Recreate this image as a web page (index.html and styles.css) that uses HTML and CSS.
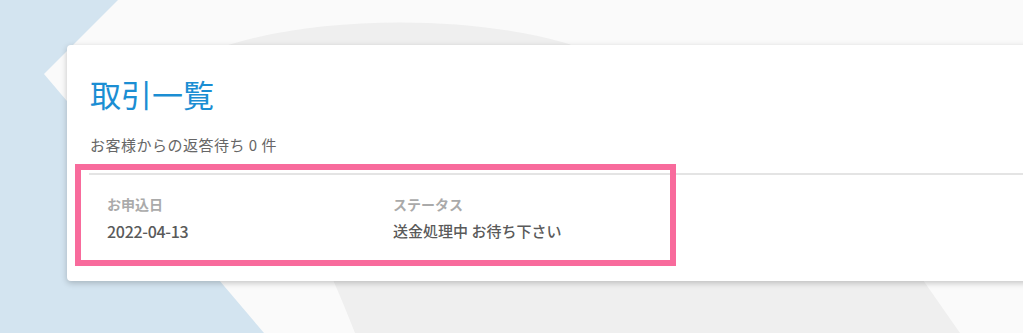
FILE: index.html
```html
<!DOCTYPE html>
<html lang="ja">
<head>
  <meta charset="UTF-8">
  <meta name="viewport" content="width=device-width, initial-scale=1.0">
  <title>取引一覧</title>
  <link rel="stylesheet" href="styles.css">
</head>
<body>
  <!-- 背景の図形 -->
  <svg class="bg" viewBox="0 0 1023 333" width="1023" height="333" aria-hidden="true">
    <rect width="1023" height="333" fill="#fafafa"/>
    <path d="M190,60 C290,10 510,10 610,60 L923,280 L960,333 L355,333 Q342,300 333,280 L250,100 Z" fill="#efefef"/>
    <polygon points="0,0 118,0 44,74 264,333 0,333" fill="#d3e4f0"/>
  </svg>

  <div class="page">
    <div class="card">
      <h1 class="title">取引一覧</h1>
      <p class="sub">お客様からの返答待ち 0 件</p>

      <div class="list">
        <div class="row">
          <div class="col col-date">
            <div class="label">お申込日</div>
            <div class="value">2022-04-13</div>
          </div>
          <div class="col">
            <div class="label">ステータス</div>
            <div class="value">送金処理中 お待ち下さい</div>
          </div>
          <span class="mark"></span>
        </div>
      </div>
    </div>
  </div>
</body>
</html>
```

FILE: styles.css
```css
* {
  margin: 0;
  padding: 0;
  box-sizing: border-box;
}
html, body {
  width: 1023px;
  height: 333px;
  overflow: hidden;
}
body {
  position: relative;
  background: #fafafa;
  font-family: "Noto Sans CJK JP", "Noto Sans", sans-serif;
  color: #555;
}
.bg {
  position: absolute;
  left: 0;
  top: 0;
  z-index: 0;
}
.page {
  position: relative;
  z-index: 1;
  padding: 45px 0 0 67px;
}
.card {
  width: 1000px;
  height: 236px;
  background: #fff;
  border-radius: 4px;
  box-shadow: 0 2px 6px rgba(0, 0, 0, .22);
  padding: 32px 0 0 22px;
}
.title {
  font-size: 31px;
  line-height: 34px;
  font-weight: 400;
  color: #1b8ed3;
  margin-left: 1px;
}
.sub {
  margin: 24px 0 0 1px;
  font-size: 15px;
  line-height: 20px;
  letter-spacing: 0.5px;
  color: #666;
}
.list {
  margin-top: 18px;
  border-top: 2px solid #e4e4e4;
}
.row {
  position: relative;
  display: flex;
  padding: 20px 0 0 18px;
}
.col-date {
  width: 286px;
}
.label {
  font-size: 14px;
  line-height: 18px;
  font-weight: 700;
  color: #aaa;
}
.value {
  margin-top: 8px;
  font-size: 15px;
  line-height: 20px;
  font-weight: 500;
  color: #5a5a5a;
}
.col-date .value {
  font-size: 16px;
  font-weight: 500;
  letter-spacing: -0.3px;
}
/* 注目枠 */
.mark {
  position: absolute;
  left: -14px;
  top: -11px;
  width: 601px;
  height: 102px;
  border: 6px solid #f86b9c;
}
```
